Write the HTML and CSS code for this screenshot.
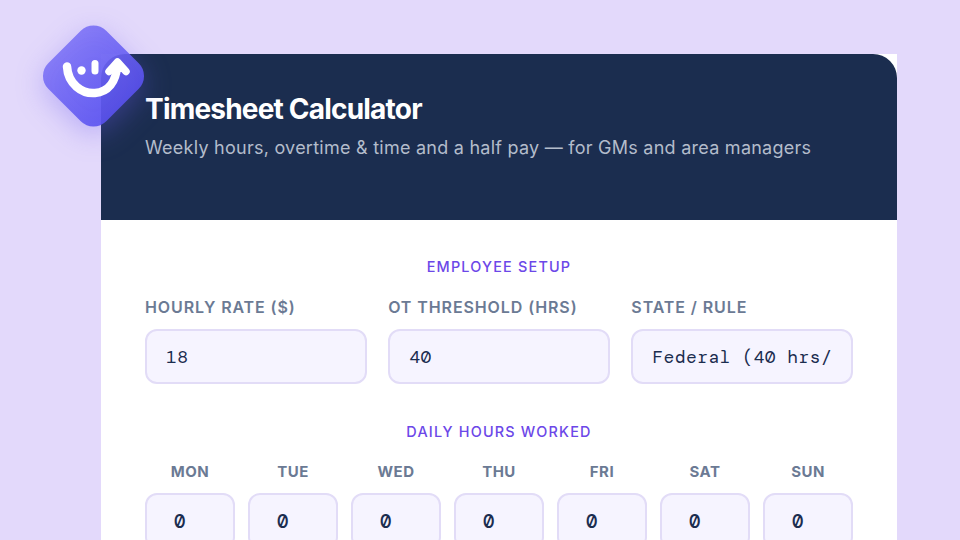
FILE: index.html
```html
<!DOCTYPE html>
<html lang="en">
<head>
<meta charset="utf-8">
<title>Timesheet Calculator</title>
<link rel="stylesheet" href="styles.css">
</head>
<body>
<svg class="logo" viewBox="30 12 128 128" width="128" height="128" aria-hidden="true">
  <defs>
    <linearGradient id="lg" x1="0" y1="0.500" x2="1" y2="0.500" gradientUnits="objectBoundingBox">
      <stop offset="0" stop-color="#7c72f6"/>
      <stop offset="1" stop-color="#5a52f0"/>
    </linearGradient>
  </defs>
  <rect x="52.500" y="35" width="82" height="82" rx="18" transform="rotate(45 93.500 76)" fill="url(#lg)" opacity=".9"/>
  <path d="M67 66.500C68 84 82 94 95 93C108 92 116 82 117 66" fill="none" stroke="#fff" stroke-width="8.500" stroke-linecap="round"/>
  <circle cx="81.500" cy="70.500" r="4.200" fill="#fff"/>
  <path d="M95 63.500V71" fill="none" stroke="#fff" stroke-width="7" stroke-linecap="round"/>
  <path d="M109 71.500L117.500 62L126 71.500" fill="none" stroke="#fff" stroke-width="7.500" stroke-linecap="round" stroke-linejoin="round"/>
  <path d="M110 72L117.500 63L125 72Z" fill="#fff"/>
</svg>
<main class="card">
  <header class="hero">
    <h1>Timesheet Calculator</h1>
    <p>Weekly hours, overtime &amp; time and a half pay — for GMs and area managers</p>
  </header>
  <div class="body">
    <h2>EMPLOYEE SETUP</h2>
    <div class="setup">
      <label class="field"><span>HOURLY RATE ($)</span><input class="box" value="18"></label>
      <label class="field"><span>OT THRESHOLD (HRS)</span><input class="box" value="40"></label>
      <label class="field"><span>STATE / RULE</span><select class="box"><option>Federal (40 hrs/week)</option></select></label>
    </div>
    <h2 class="second">DAILY HOURS WORKED</h2>
    <div class="days">
      <label class="day"><span>MON</span><input class="box num" value="0"></label>
      <label class="day"><span>TUE</span><input class="box num" value="0"></label>
      <label class="day"><span>WED</span><input class="box num" value="0"></label>
      <label class="day"><span>THU</span><input class="box num" value="0"></label>
      <label class="day"><span>FRI</span><input class="box num" value="0"></label>
      <label class="day"><span>SAT</span><input class="box num" value="0"></label>
      <label class="day"><span>SUN</span><input class="box num" value="0"></label>
    </div>
  </div>
</main>
</body>
</html>
```
FILE: styles.css
```css
* { box-sizing: border-box; }
html, body { margin: 0; height: 540px; overflow: hidden; }
body {
  background: #e3d9fb;
  font-family: Inter, "Liberation Sans", sans-serif;
  padding: 54px 63px 0 101px;
}
.logo {
  position: absolute;
  left: 30px;
  top: 12px;
  z-index: 2;
  filter: drop-shadow(0 8px 14px rgba(108, 92, 240, .38));
}
.card { background: #fff; width: 796px; }
.hero {
  background: #1b2d4f;
  border-radius: 24px 24px 0 0;
  height: 166px;
  padding: 39px 44px 0;
  color: #fff;
}
.hero h1 { margin: 0; font-size: 28px; line-height: 32px; font-weight: 700; letter-spacing: -.8px; }
.hero p { margin: 11px 0 0; font-size: 18px; line-height: 24px; color: #b3bccb; letter-spacing: .25px; }
.body { padding: 38px 44px 0; }
h2 {
  margin: 0;
  text-align: center;
  font-size: 14.400px;
  line-height: 18px;
  font-weight: 500;
  letter-spacing: 1.200px;
  color: #6c47e8;
}
h2.second { margin-top: 39px; }
.setup { display: grid; grid-template-columns: repeat(3, 1fr); gap: 21.500px; margin-top: 21px; }
.field span, .day span {
  display: block;
  color: #6b7a94;
  font-weight: 600;
  font-size: 16px;
  line-height: 20px;
  letter-spacing: .9px;
}
.box {
  display: block;
  width: 100%;
  height: 55px;
  margin-top: 12px;
  padding: 0 19px;
  border: 2px solid #e2dcf7;
  border-radius: 12px;
  background: #f6f4ff;
  color: #1b2d4f;
  font-family: "DM Mono", "DejaVu Sans Mono", monospace;
  font-size: 18px;
  letter-spacing: .45px;
  appearance: none;
  outline: none;
}
.days { display: grid; grid-template-columns: repeat(7, 1fr); gap: 13px; margin-top: 21px; }
.day span { text-align: center; font-size: 15px; font-weight: 700; letter-spacing: .5px; }
.num { height: 56px; padding: 0 27px; margin-top: 11px; font-size: 19px; font-weight: 700; }
```
